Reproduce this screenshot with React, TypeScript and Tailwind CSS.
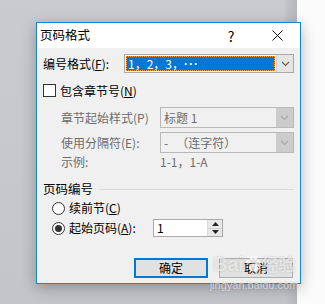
import React from "react";

const font = { fontFamily: '"Noto Sans CJK SC", "Noto Sans", sans-serif' };

function Chevron({ color = "#606060" }: { color?: string }) {
  return (
    <svg width="9" height="6" viewBox="0 0 9 6">
      <path d="M1 1 L4.5 4.5 L8 1" fill="none" stroke={color} strokeWidth="1.1" />
    </svg>
  );
}

function U({ c }: { c: string }) {
  return <span className="underline underline-offset-1">{c}</span>;
}

export default function App() {
  return (
    <div
      className="relative w-[325px] h-[304px] overflow-hidden text-[12px] leading-none text-black"
      style={font}
    >
      {/* desktop background */}
      <div className="absolute inset-0 flex">
        <div className="w-[285px] h-full bg-gradient-to-b from-[#c9cbce] to-[#c3c5c8]" />
        <div className="w-[12px] h-full bg-gradient-to-r from-[#c3c5c8] to-[#b4b6b9]" />
        <div className="flex-1 h-full bg-[#fbfbfb]" />
      </div>

      {/* dialog window */}
      <div className="absolute left-[36px] top-[22px] w-[265px] h-[262px] border border-[#1883d7] bg-[#f0f0f0] shadow-[0_4px_14px_rgba(0,0,0,0.28)] flex flex-col">
        {/* title bar */}
        <div className="h-[25px] bg-white flex items-center">
          <div className="pl-[3px] text-[12.5px] flex-1">页码格式</div>
          <div className="w-[46px] h-full flex items-center justify-center text-[14px]">?</div>
          <div className="w-[46px] h-full flex items-center justify-center">
            <svg width="11" height="11" viewBox="0 0 11 11">
              <path d="M0.5 0.5 L10.5 10.5 M10.5 0.5 L0.5 10.5" stroke="#111" strokeWidth="1" />
            </svg>
          </div>
        </div>

        {/* body */}
        <div className="flex flex-col pl-[6px] pr-[6px]">
          {/* row 1 */}
          <div className="mt-[6px] h-[19px] flex items-center">
            <div className="w-[81px]">
              编号格式(<U c="F" />):
            </div>
            <div className="flex-1 h-full border border-[#a9a9a9] bg-white flex">
              <div className="flex-1 m-[1px] bg-[#0078d7] text-white outline outline-1 outline-dotted outline-[#f7a13a] -outline-offset-1 flex items-center pl-[2px]">
                1，2，3，<span style={{ fontFamily: '"Liberation Sans", sans-serif' }} className="font-bold tracking-[1px]">···</span>
              </div>
              <div className="w-[17px] bg-[#e5e5e5] border-l border-[#cfcfcf] flex items-center justify-center">
                <Chevron />
              </div>
            </div>
          </div>

          {/* checkbox */}
          <div className="mt-[11px] h-[13px] flex items-center">
            <div className="w-[13px] h-[13px] border border-[#333] bg-white" />
            <div className="ml-[4px]">
              包含章节号(<U c="N" />)
            </div>
          </div>

          {/* row 3 */}
          <div className="mt-[10px] h-[21px] flex items-center text-[#6d6d6d]">
            <div className="pl-[18px] w-[117px]">章节起始样式(P)</div>
            <div className="flex-1 h-full border border-[#b9b9b9] bg-[#f0f0f0] flex">
              <div className="flex-1 flex items-center pl-[3px]">标题 1</div>
              <div className="w-[17px] bg-[#cccccc] flex items-center justify-center">
                <Chevron color="#a8a8a8" />
              </div>
            </div>
          </div>

          {/* row 4 */}
          <div className="mt-[4px] h-[21px] flex items-center text-[#6d6d6d]">
            <div className="pl-[18px] w-[117px]">使用分隔符(E):</div>
            <div className="flex-1 h-full border border-[#b9b9b9] bg-[#f0f0f0] flex">
              <div className="flex-1 flex items-center pl-[3px]">-&nbsp;&nbsp;&nbsp;（连字符）</div>
              <div className="w-[17px] bg-[#cccccc] flex items-center justify-center">
                <Chevron color="#a8a8a8" />
              </div>
            </div>
          </div>

          {/* example */}
          <div className="mt-[2px] h-[14px] flex items-center text-[#6d6d6d]">
            <div className="pl-[18px] w-[117px]">示例:</div>
            <div>1-1，1-A</div>
          </div>

          {/* group header */}
          <div className="mt-[13px] h-[14px] flex items-center">
            <div className="text-[12.5px]">页码编号</div>
            <div className="flex-1 ml-[6px] h-px bg-[#dcdcdc]" />
          </div>

          {/* radio 1 */}
          <div className="mt-[5px] h-[14px] flex items-center pl-[9px]">
            <div className="w-[13px] h-[13px] rounded-full border border-[#333] bg-white" />
            <div className="ml-[4px]">
              续前节(<U c="C" />)
            </div>
          </div>

          {/* radio 2 */}
          <div className="mt-[4px] h-[18px] flex items-center pl-[9px]">
            <div className="w-[13px] h-[13px] rounded-full border border-[#333] bg-white flex items-center justify-center">
              <div className="w-[7px] h-[7px] rounded-full bg-[#333]" />
            </div>
            <div className="ml-[4px] w-[84px]">
              起始页码(<U c="A" />):
            </div>
            <div className="w-[70px] h-full border border-[#a9a9a9] bg-white flex">
              <div className="flex-1 flex items-center pl-[3px]">1</div>
              <div className="w-[15px] flex flex-col border-l border-[#dadada]">
                <div className="flex-1 bg-[#e8e8e8] flex items-center justify-center border-b border-[#d0d0d0]">
                  <svg width="7" height="4" viewBox="0 0 7 4">
                    <path d="M0 4 L3.5 0 L7 4 Z" fill="#222" />
                  </svg>
                </div>
                <div className="flex-1 bg-[#e8e8e8] flex items-center justify-center">
                  <svg width="7" height="4" viewBox="0 0 7 4">
                    <path d="M0 0 L3.5 4 L7 0 Z" fill="#222" />
                  </svg>
                </div>
              </div>
            </div>
          </div>

          {/* buttons */}
          <div className="mt-[21px] h-[20px] flex justify-end gap-[11px] pr-[1px]">
            <div className="w-[74px] h-full border-2 border-[#0078d7] bg-[#e1e1e1] flex items-center justify-center">
              确定
            </div>
            <div className="w-[74px] h-full border border-[#adadad] bg-[#e1e1e1] flex items-center justify-center">
              取消
            </div>
          </div>
        </div>
      </div>

      {/* watermark overlay */}
      <div className="absolute left-[208px] top-[252px] w-[92px] flex flex-col items-center text-white/60 [text-shadow:0_0_2px_rgba(0,0,0,0.2)]">
        <div className="flex items-center h-[24px]">
          <span className="text-[21px] font-bold leading-[24px] tracking-tight" style={{ fontFamily: '"Liberation Sans", sans-serif' }}>
            Bai
          </span>
          <svg width="16" height="18" viewBox="0 0 16 18" className="mx-[1px] opacity-70">
            <circle cx="3" cy="7" r="2" fill="white" />
            <circle cx="6.5" cy="3" r="2" fill="white" />
            <circle cx="10.5" cy="3" r="2" fill="white" />
            <circle cx="13.5" cy="7" r="2" fill="white" />
            <ellipse cx="8.5" cy="12.5" rx="4.5" ry="4" fill="white" />
          </svg>
          <span className="text-[17px] font-bold leading-[24px]">经验</span>
        </div>
        <div className="text-[11px] leading-[14px] mt-[2px]" style={{ fontFamily: '"Liberation Sans", sans-serif' }}>
          jingyan.baidu.com
        </div>
      </div>
    </div>
  );
}
